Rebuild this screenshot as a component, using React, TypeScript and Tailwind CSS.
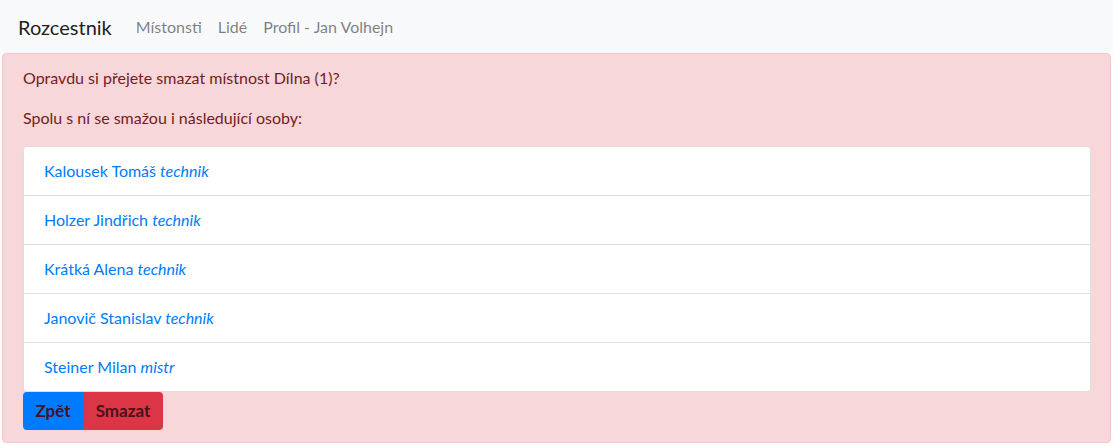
const people = [
  { name: "Kalousek Tomáš", job: "technik" },
  { name: "Holzer Jindřich", job: "technik" },
  { name: "Krátká Alena", job: "technik" },
  { name: "Janovič Stanislav", job: "technik" },
  { name: "Steiner Milan", job: "mistr" },
];

const App = () => {
  return (
    <div className="min-h-[446px] bg-white font-['Lato',sans-serif] text-[16px] leading-6 text-[#212529]">
      <nav className="flex h-[53px] items-center bg-[#f8f9fa] px-[18px]">
        <a className="mr-[16px] text-[20px] leading-[30px] text-black/90">Rozcestnik</a>
        <div className="flex">
          <a className="px-2 text-black/50">Místonsti</a>
          <a className="px-2 text-black/50">Lidé</a>
          <a className="px-2 text-black/50">Profil - Jan Volhejn</a>
        </div>
      </nav>
      <div className="mx-[2px] rounded border border-[#f5c6cb] bg-[#f8d7da] px-5 py-3 text-[#721c24]">
        <p className="mb-4">Opravdu si přejete smazat místnost Dílna (1)?</p>
        <p className="mb-4">Spolu s ní se smažou i následující osoby:</p>
        <ul className="mr-[-1px] rounded border border-black/[0.125] bg-white">
          {people.map((p, i) => (
            <li
              key={p.name}
              className={`px-5 py-3 text-[#007bff] ${i > 0 ? "border-t border-black/[0.125]" : ""}`}
            >
              {p.name} <i>{p.job}</i>
            </li>
          ))}
        </ul>
        <div className="flex">
          <button className="w-[60px] rounded-l bg-[#007bff] py-[7px] text-[17px] font-bold text-[#4a1219]">Zpět</button>
          <button className="w-[80px] rounded-r bg-[#dc3545] py-[7px] text-[17px] font-bold text-[#4a1219]">Smazat</button>
        </div>
      </div>
    </div>
  );
};

export default App;
